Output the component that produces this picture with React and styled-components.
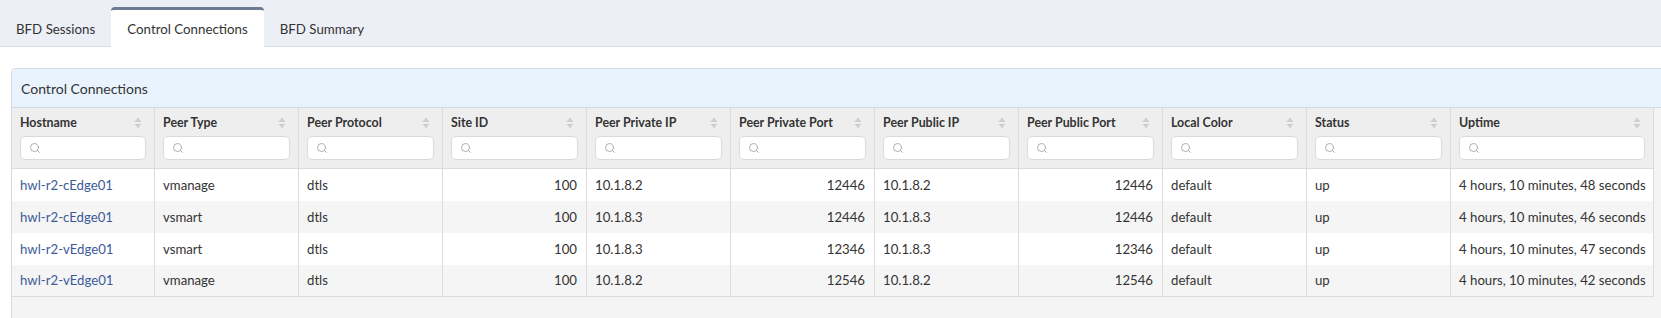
import * as React from 'react';
import styled, { createGlobalStyle } from 'styled-components';
import { Search } from 'lucide-react';

const columns = [
  { key: 'host', label: 'Hostname', width: 143 },
  { key: 'type', label: 'Peer Type', width: 144 },
  { key: 'proto', label: 'Peer Protocol', width: 144 },
  { key: 'site', label: 'Site ID', width: 144, right: true },
  { key: 'privIp', label: 'Peer Private IP', width: 144 },
  { key: 'privPort', label: 'Peer Private Port', width: 144, right: true },
  { key: 'pubIp', label: 'Peer Public IP', width: 144 },
  { key: 'pubPort', label: 'Peer Public Port', width: 144, right: true },
  { key: 'color', label: 'Local Color', width: 144 },
  { key: 'status', label: 'Status', width: 144 },
  { key: 'uptime', label: 'Uptime', width: 203 },
];

const rows = [
  { host: 'hwl-r2-cEdge01', type: 'vmanage', proto: 'dtls', site: '100', privIp: '10.1.8.2', privPort: '12446', pubIp: '10.1.8.2', pubPort: '12446', color: 'default', status: 'up', uptime: '4 hours, 10 minutes, 48 seconds' },
  { host: 'hwl-r2-cEdge01', type: 'vsmart', proto: 'dtls', site: '100', privIp: '10.1.8.3', privPort: '12446', pubIp: '10.1.8.3', pubPort: '12446', color: 'default', status: 'up', uptime: '4 hours, 10 minutes, 46 seconds' },
  { host: 'hwl-r2-vEdge01', type: 'vsmart', proto: 'dtls', site: '100', privIp: '10.1.8.3', privPort: '12346', pubIp: '10.1.8.3', pubPort: '12346', color: 'default', status: 'up', uptime: '4 hours, 10 minutes, 47 seconds' },
  { host: 'hwl-r2-vEdge01', type: 'vmanage', proto: 'dtls', site: '100', privIp: '10.1.8.2', privPort: '12546', pubIp: '10.1.8.2', pubPort: '12546', color: 'default', status: 'up', uptime: '4 hours, 10 minutes, 42 seconds' },
];

const tabs = ['BFD Sessions', 'Control Connections', 'BFD Summary'];

const SortIcon = () => (
  <svg width="8" height="12" viewBox="0 0 8 12">
    <path d="M4 0.5 L7.5 5 H0.5 Z" fill="#cfcfcf" />
    <path d="M4 11.5 L7.5 7 H0.5 Z" fill="#cfcfcf" />
  </svg>
);

const App = () => {
  return (
    <>
      <GlobalStyle />
      <TabBar>
        {tabs.map((t) => (
          <Tab key={t} active={t === 'Control Connections'}>{t}</Tab>
        ))}
      </TabBar>

      <Card>
        <CardHeader>Control Connections</CardHeader>
        <CardBody>
          <Table>
            <colgroup>
              {columns.map((c) => <col key={c.key} style={{ width: c.width }} />)}
            </colgroup>
            <thead>
              <tr>
                {columns.map((c) => (
                  <Th key={c.key}>
                    <ThTop>
                      <span>{c.label}</span>
                      <SortIcon />
                    </ThTop>
                    <Filter>
                      <Search size={12} strokeWidth={1.6} color="#9a9a9a" />
                    </Filter>
                  </Th>
                ))}
              </tr>
            </thead>
            <tbody>
              {rows.map((r, i) => (
                <Tr key={i} striped={i % 2 === 1}>
                  {columns.map((c) => (
                    <Td key={c.key} right={c.right}>
                      {c.key === 'host' ? <HostLink>{r[c.key]}</HostLink> : r[c.key]}
                    </Td>
                  ))}
                </Tr>
              ))}
            </tbody>
          </Table>
          <Footer />
        </CardBody>
      </Card>
    </>
  );
};

export default App;

const GlobalStyle = createGlobalStyle`
  body {
    margin: 0;
    background: #fff;
    font-family: Lato, "Liberation Sans", sans-serif;
    color: #333;
    overflow: hidden;
  }
`;

const TabBar = styled.nav`
  display: flex;
  align-items: flex-end;
  height: 47px;
  background: #eceff5;
  border-bottom: 1px solid #d6dae2;
  box-sizing: border-box;
`;

const Tab = styled.div`
  display: flex;
  align-items: center;
  height: 39px;
  padding: 0 16px;
  margin-bottom: -1px;
  font-size: 13.3px;
  color: #333;
  box-sizing: border-box;
  border-top: 3px solid transparent;
  border-radius: 4px 4px 0 0;

  ${props => props.active ? `
    background: #fff;
    border-top-color: #6d7b95;
    height: 40px;
  ` : null}
`;

const Card = styled.section`
  margin: 21px 0 0 11px;
  width: 1700px;
  border: 1px solid #d3d9df;
  border-radius: 4px;
  overflow: hidden;
`;

const CardHeader = styled.div`
  height: 38px;
  display: flex;
  align-items: center;
  padding: 0 9px;
  background: #e9f3fd;
  border-bottom: 1px solid #d3d9df;
  font-size: 14px;
  color: #333;
`;

const CardBody = styled.div`
  background: #f4f4f4;
`;

const Table = styled.table`
  border-collapse: collapse;
  table-layout: fixed;
  width: 1642px;
  margin-left: -1px;
  font-size: 13.2px;
`;

const Th = styled.th`
  padding: 6px 8px 8px;
  background: #efeeee;
  border: 1px solid #dcdcdc;
  border-top: none;
  text-align: left;
  vertical-align: top;
  box-sizing: border-box;
`;

const ThTop = styled.div`
  display: flex;
  align-items: center;
  justify-content: space-between;
  padding-right: 4px;
  font-size: 12.4px;
  font-weight: 700;
  color: #333;
  height: 17px;
`;

const Filter = styled.div`
  display: flex;
  align-items: center;
  margin-top: 5px;
  height: 24px;
  padding-left: 8px;
  background: #fff;
  border: 1px solid #dadada;
  border-radius: 5px;
  box-sizing: border-box;
`;

const Tr = styled.tr`
  background: ${props => props.striped ? '#f5f5f5' : '#fff'};
`;

const Td = styled.td`
  height: 32px;
  padding: 0 9px 0 8px;
  border-left: 1px solid #dcdcdc;
  border-right: 1px solid #dcdcdc;
  text-align: ${props => props.right ? 'right' : 'left'};
  white-space: nowrap;
  color: #333;
  box-sizing: border-box;

  tr:last-child & {
    border-bottom: 1px solid #dcdcdc;
  }
`;

const HostLink = styled.span`
  color: #3d5a98;
`;

const Footer = styled.div`
  height: 30px;
`;
